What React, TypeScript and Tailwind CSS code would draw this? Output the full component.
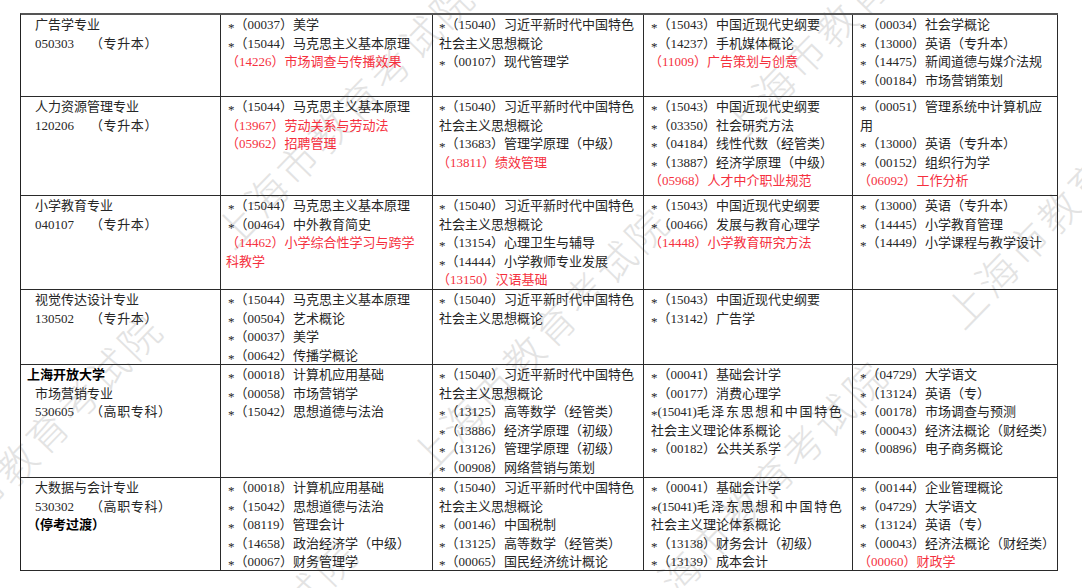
import React from "react";

// "!" = red line, "#" = bold line, "~" = indented line (first column), "|" = gap after the code
type Row = { h: string; cells: string[][] };

const rows: Row[] = [
  {
    h: "h-[82px]",
    cells: [
      ["~广告学专业", "~050303|（专升本）"],
      ["*（00037）美学", "*（15044）马克思主义基本原理", "!（14226）市场调查与传播效果"],
      ["*（15040）习近平新时代中国特色", "社会主义思想概论", "*（00107）现代管理学"],
      ["*（15043）中国近现代史纲要", "*（14237）手机媒体概论", "!（11009）广告策划与创意"],
      ["*（00034）社会学概论", "*（13000）英语（专升本）", "*（14475）新闻道德与媒介法规", "*（00184）市场营销策划"],
    ],
  },
  {
    h: "h-[99px]",
    cells: [
      ["~人力资源管理专业", "~120206|（专升本）"],
      ["*（15044）马克思主义基本原理", "!（13967）劳动关系与劳动法", "!（05962）招聘管理"],
      ["*（15040）习近平新时代中国特色", "社会主义思想概论", "*（13683）管理学原理（中级）", "!（13811）绩效管理"],
      ["*（15043）中国近现代史纲要", "*（03350）社会研究方法", "*（04184）线性代数（经管类）", "*（13887）经济学原理（中级）", "!（05968）人才中介职业规范"],
      ["*（00051）管理系统中计算机应", "用", "*（13000）英语（专升本）", "*（00152）组织行为学", "!（06092）工作分析"],
    ],
  },
  {
    h: "h-[94px]",
    cells: [
      ["~小学教育专业", "~040107|（专升本）"],
      ["*（15044）马克思主义基本原理", "*（00464）中外教育简史", "!（14462）小学综合性学习与跨学", "!科教学"],
      ["*（15040）习近平新时代中国特色", "社会主义思想概论", "*（13154）心理卫生与辅导", "*（14444）小学教师专业发展", "!（13150）汉语基础"],
      ["*（15043）中国近现代史纲要", "*（00466）发展与教育心理学", "!（14448）小学教育研究方法"],
      ["*（13000）英语（专升本）", "*（14445）小学教育管理", "*（14449）小学课程与教学设计"],
    ],
  },
  {
    h: "h-[75px]",
    cells: [
      ["~视觉传达设计专业", "~130502|（专升本）"],
      ["*（15044）马克思主义基本原理", "*（00504）艺术概论", "*（00037）美学", "*（00642）传播学概论"],
      ["*（15040）习近平新时代中国特色", "社会主义思想概论"],
      ["*（15043）中国近现代史纲要", "*（13142）广告学"],
      [],
    ],
  },
  {
    h: "h-[113px]",
    cells: [
      ["#上海开放大学", "~市场营销专业", "~530605|（高职专科）"],
      ["*（00018）计算机应用基础", "*（00058）市场营销学", "*（15042）思想道德与法治"],
      ["*（15040）习近平新时代中国特色", "社会主义思想概论", "*（13125）高等数学（经管类）", "*（13886）经济学原理（初级）", "*（13126）管理学原理（初级）", "*（00908）网络营销与策划"],
      ["*（00041）基础会计学", "*（00177）消费心理学", "^*(15041)|毛泽东思想和中国特色", "社会主义理论体系概论", "*（00182）公共关系学"],
      ["*（04729）大学语文", "*（13124）英语（专）", "*（00178）市场调查与预测", "*（00043）经济法概论（财经类）", "*（00896）电子商务概论"],
    ],
  },
  {
    h: "h-[93px]",
    cells: [
      ["~大数据与会计专业", "~530302|（高职专科）", "#（停考过渡）"],
      ["*（00018）计算机应用基础", "*（15042）思想道德与法治", "*（08119）管理会计", "*（14658）政治经济学（中级）", "*（00067）财务管理学"],
      ["*（15040）习近平新时代中国特色", "社会主义思想概论", "*（00146）中国税制", "*（13125）高等数学（经管类）", "*（00065）国民经济统计概论"],
      ["*（00041）基础会计学", "^*(15041)|毛泽东思想和中国特色", "社会主义理论体系概论", "*（13138）财务会计（初级）", "*（13139）成本会计"],
      ["*（00144）企业管理概论", "*（04729）大学语文", "*（13124）英语（专）", "*（00043）经济法概论（财经类）", "!（00060）财政学"],
    ],
  },
];

const colPad = ["pl-[7px]", "pl-[7px]", "pl-[6px]", "pl-[7px]", "pl-[7px]"];

// centre of "上" for each repeat of the watermark
const marks = [
  { x: -77, y: 557 },
  { x: 235, y: 225 },
  { x: 118, y: 782 },
  { x: 430, y: 450 },
  { x: 742, y: 118 },
  { x: 648, y: 603 },
  { x: 965, y: 305 },
];

function Star() {
  return <span className="relative top-[3px]">*</span>;
}

function Line({ text }: { text: string }) {
  if (text.startsWith("!")) {
    return <div className="-ml-[2px] text-[#f5303e]">{text.slice(1)}</div>;
  }
  if (text.startsWith("#")) {
    return <div className="-ml-[1px] font-bold text-black">{text.slice(1)}</div>;
  }
  if (text.startsWith("~")) {
    const [code, rest] = text.slice(1).split("|");
    return (
      <div className="pl-[7px]">
        {code}
        {rest && <span className="ml-[16px] tracking-[0.6px]">{rest}</span>}
      </div>
    );
  }
  if (text.startsWith("^")) {
    // squeezed prefix, wider characters after it
    const [code, rest] = text.slice(2).split("|");
    return (
      <div>
        <Star />
        <span className="tracking-[-0.3px]">{code}</span>
        <span className="tracking-[1.7px]">{rest}</span>
      </div>
    );
  }
  if (text.startsWith("*")) {
    return (
      <div>
        <Star />
        {text.slice(1)}
      </div>
    );
  }
  return <div>{text}</div>;
}

export default function App() {
  return (
    <div className="relative w-[1082px] h-[588px] overflow-hidden bg-white">
      {/* watermark */}
      {marks.map((m, i) => (
        <div key={i} aria-hidden="true" className="absolute pointer-events-none select-none" style={{ left: m.x, top: m.y }}>
          <div className="origin-top-left rotate-[-45.7deg]">
            <div className="-translate-x-[20px] -translate-y-1/2 whitespace-nowrap text-[40px] leading-[40px] tracking-[4px] text-[#e3e3e3] font-['Noto_Sans_CJK_SC',sans-serif] font-light">
              上海市教育考试院
            </div>
          </div>
        </div>
      ))}

      <div className="relative ml-[20px] mt-[13px] w-[1038px] border-l border-t-2 border-l-[#222] border-t-[#555] font-['Liberation_Serif','Noto_Sans_CJK_SC',serif] text-[13px] leading-[18.6px] text-[#262626]">
        {rows.map((row, r) => (
          <div key={r} className={`grid grid-cols-[200px_212px_211px_209px_205px] ${row.h}`}>
            {row.cells.map((lines, c) => (
              <div
                key={c}
                className={`border-r border-b border-[#2a2a2a] pt-[1px] whitespace-nowrap overflow-hidden ${colPad[c]}`}
              >
                {lines.map((t, k) => (
                  <Line key={k} text={t} />
                ))}
              </div>
            ))}
          </div>
        ))}
      </div>
    </div>
  );
}
